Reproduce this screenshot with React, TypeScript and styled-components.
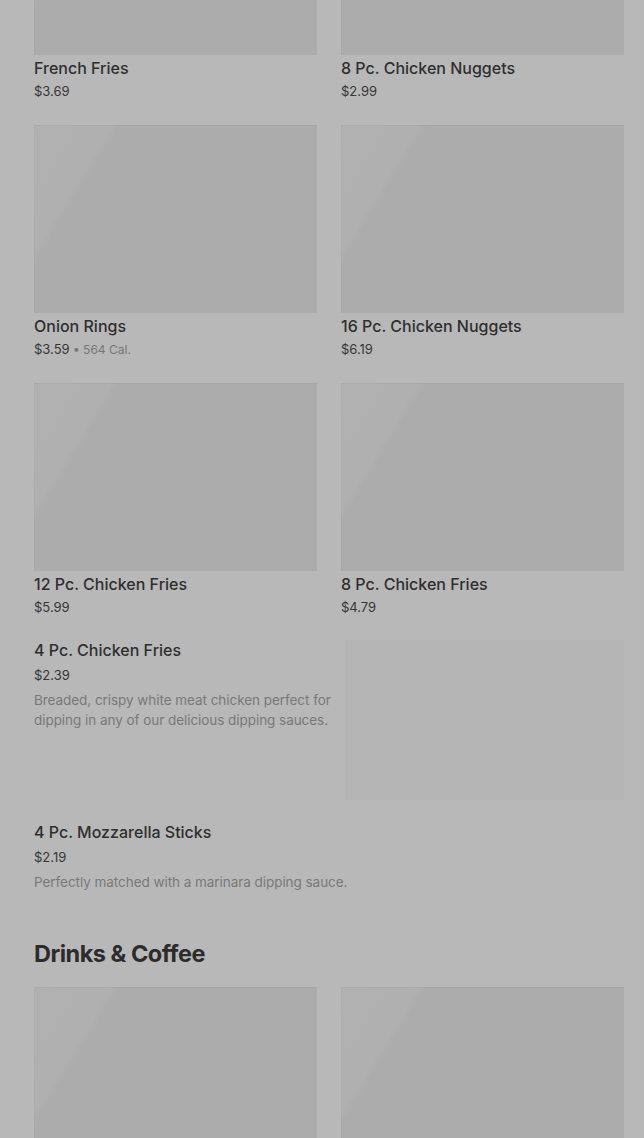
import React from 'react';
import styled, { createGlobalStyle } from 'styled-components';

const GlobalStyle = createGlobalStyle`
  html, body {
    margin: 0;
    padding: 0;
    background: #b8b8b8;
  }
  body {
    font-family: Inter, "Noto Sans", "Liberation Sans", sans-serif;
    color: #2e2e2e;
    overflow: hidden;
  }
`;

const Page = styled.main`
  padding: 0 20px 0 34px;
  margin-top: -133px;
`;

const Grid = styled.div`
  display: grid;
  grid-template-columns: 283px 283px;
  column-gap: 24px;
  row-gap: 24px;
`;

const Card = styled.div`
  display: flex;
  flex-direction: column;
`;

const Thumb = styled.div`
  height: 188px;
  background: linear-gradient(121.6deg, #b1b1b1 0%, #b0b0b0 19.5%, #acacac 21.5%, #acacac 100%);
  box-shadow: inset 0 1px 0 rgba(0, 0, 0, 0.03), inset 1px 0 0 rgba(0, 0, 0, 0.02);
`;

const Title = styled.div<{ $top?: number }>`
  font-size: 16px;
  line-height: 20px;
  font-weight: 500;
  color: #2f2f2f;
  margin-top: ${p => p.$top ?? 3}px;
`;

const Price = styled.div<{ $top?: number }>`
  font-size: 13px;
  line-height: 19px;
  color: #363636;
  margin-top: ${p => p.$top ?? 4}px;
`;

const Cal = styled.span`
  font-size: 12px;
  color: #777777;
`;

const List = styled.div`
  display: flex;
  flex-direction: column;
  gap: 22px;
  margin-top: 23px;
`;

const ListItem = styled.div`
  display: flex;
  gap: 12px;
`;

const ListText = styled.div`
  flex: 1;
  display: flex;
  flex-direction: column;
`;

const Desc = styled.div`
  font-size: 13.5px;
  line-height: 20px;
  letter-spacing: -0.05px;
  color: #787878;
  margin-top: 5px;
`;

const WideThumb = styled.div`
  width: 278px;
  height: 160px;
  flex: none;
  background: #b5b5b5;
  box-shadow: inset 1px 0 0 rgba(0, 0, 0, 0.015);
`;

const SectionTitle = styled.h2`
  margin: 46px 0 17px;
  font-size: 23.5px;
  line-height: 32px;
  font-weight: 700;
  letter-spacing: -0.5px;
  color: #2c2c2c;
`;

type Item = { name: string; price: string; cal?: string };

const sides: Item[] = [
  { name: 'French Fries', price: '$3.69' },
  { name: '8 Pc. Chicken Nuggets', price: '$2.99' },
  { name: 'Onion Rings', price: '$3.59', cal: '564 Cal.' },
  { name: '16 Pc. Chicken Nuggets', price: '$6.19' },
  { name: '12 Pc. Chicken Fries', price: '$5.99' },
  { name: '8 Pc. Chicken Fries', price: '$4.79' },
];

function App() {
  return (
    <>
      <GlobalStyle />
      <Page>
        <Grid>
          {sides.map(item => (
            <Card key={item.name}>
              <Thumb />
              <Title>{item.name}</Title>
              <Price>
                {item.price}
                {item.cal && <Cal> • {item.cal}</Cal>}
              </Price>
            </Card>
          ))}
        </Grid>

        <List>
          <ListItem>
            <ListText>
              <Title $top={0}>4 Pc. Chicken Fries</Title>
              <Price $top={6}>$2.39</Price>
              <Desc>Breaded, crispy white meat chicken perfect for dipping in any of our delicious dipping sauces.</Desc>
            </ListText>
            <WideThumb />
          </ListItem>
          <ListItem>
            <ListText>
              <Title $top={0}>4 Pc. Mozzarella Sticks</Title>
              <Price $top={6}>$2.19</Price>
              <Desc>Perfectly matched with a marinara dipping sauce.</Desc>
            </ListText>
          </ListItem>
        </List>

        <SectionTitle>Drinks &amp; Coffee</SectionTitle>
        <Grid>
          <Card>
            <Thumb />
          </Card>
          <Card>
            <Thumb />
          </Card>
        </Grid>
      </Page>
    </>
  );
}

export default App;
